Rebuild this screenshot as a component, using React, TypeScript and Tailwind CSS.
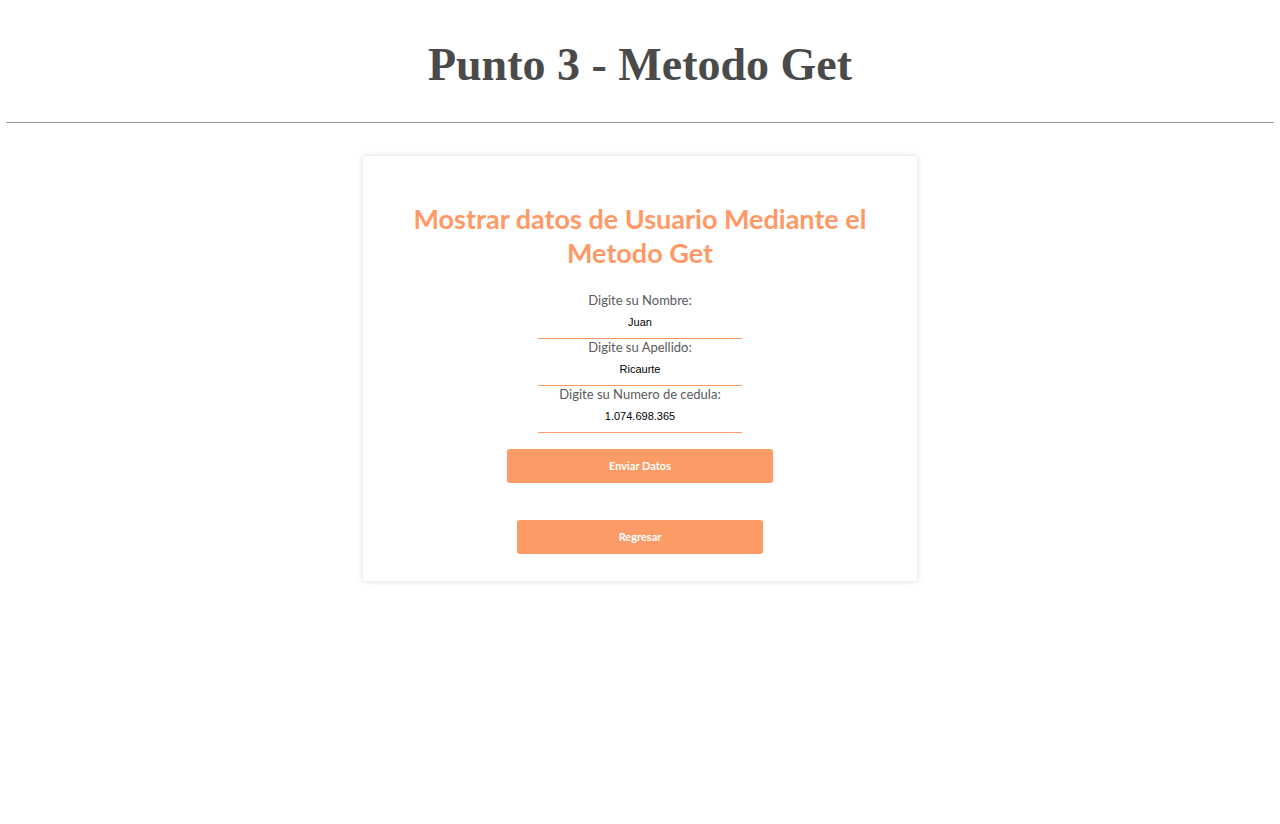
import React from 'react'

const Field = ({ label, value }: { label: string; value: string }) => (
    <div className="flex flex-col items-center">
        <label className="text-[13px] leading-[17px] text-[#5a5a5a]" style={{ fontFamily: 'Lato, "Open Sans", sans-serif' }}>
            {label}
        </label>
        <input
            type="text"
            defaultValue={value}
            className="w-[204px] h-[30px] pb-[3px] text-center text-[11px] text-black bg-transparent outline-none border-0 border-b border-solid border-b-[#ff9966]"
            style={{ fontFamily: '"Liberation Sans", Arial, sans-serif' }}
        />
    </div>
)

const App = () => {
    return (
        <div className="w-full min-h-[824px] bg-white">
            <h1 className="pt-[38px] pb-[14px] text-center text-[46px] leading-[54px] font-bold text-[#4a4a4a]" style={{ fontFamily: '"Liberation Serif", "Times New Roman", serif' }}>
                Punto 3 - Metodo Get
            </h1>
            <hr className="mx-[6px] border-t border-[#999999] mt-[16px]" />
            <div className="flex justify-center mt-[33px]">
                <div className="w-[554px] h-[425px] bg-white shadow-[0_0_6px_rgba(0,0,0,0.15)] flex flex-col items-center pt-[46px]">
                    <h2 className="text-[27px] leading-[34px] font-bold text-[#ff9966] text-center px-[30px]" style={{ fontFamily: 'Lato, "Open Sans", sans-serif' }}>
                        Mostrar datos de Usuario Mediante el Metodo Get
                    </h2>
                    <div className="mt-[22px] flex flex-col">
                        <Field label="Digite su Nombre:" value="Juan" />
                        <Field label="Digite su Apellido:" value="Ricaurte" />
                        <Field label="Digite su Numero de cedula:" value="1.074.698.365" />
                    </div>
                    <button type="button" className="mt-[16px] w-[266px] h-[34px] rounded-[3px] bg-[#fd9b66] text-white text-[11px] font-bold" style={{ fontFamily: 'Lato, "Open Sans", sans-serif' }}>
                        Enviar Datos
                    </button>
                    <button type="button" className="mt-[37px] w-[246px] h-[34px] rounded-[3px] bg-[#fd9b66] text-white text-[11px] font-bold" style={{ fontFamily: 'Lato, "Open Sans", sans-serif' }}>
                        Regresar
                    </button>
                </div>
            </div>
        </div>
    )
}

export default App
